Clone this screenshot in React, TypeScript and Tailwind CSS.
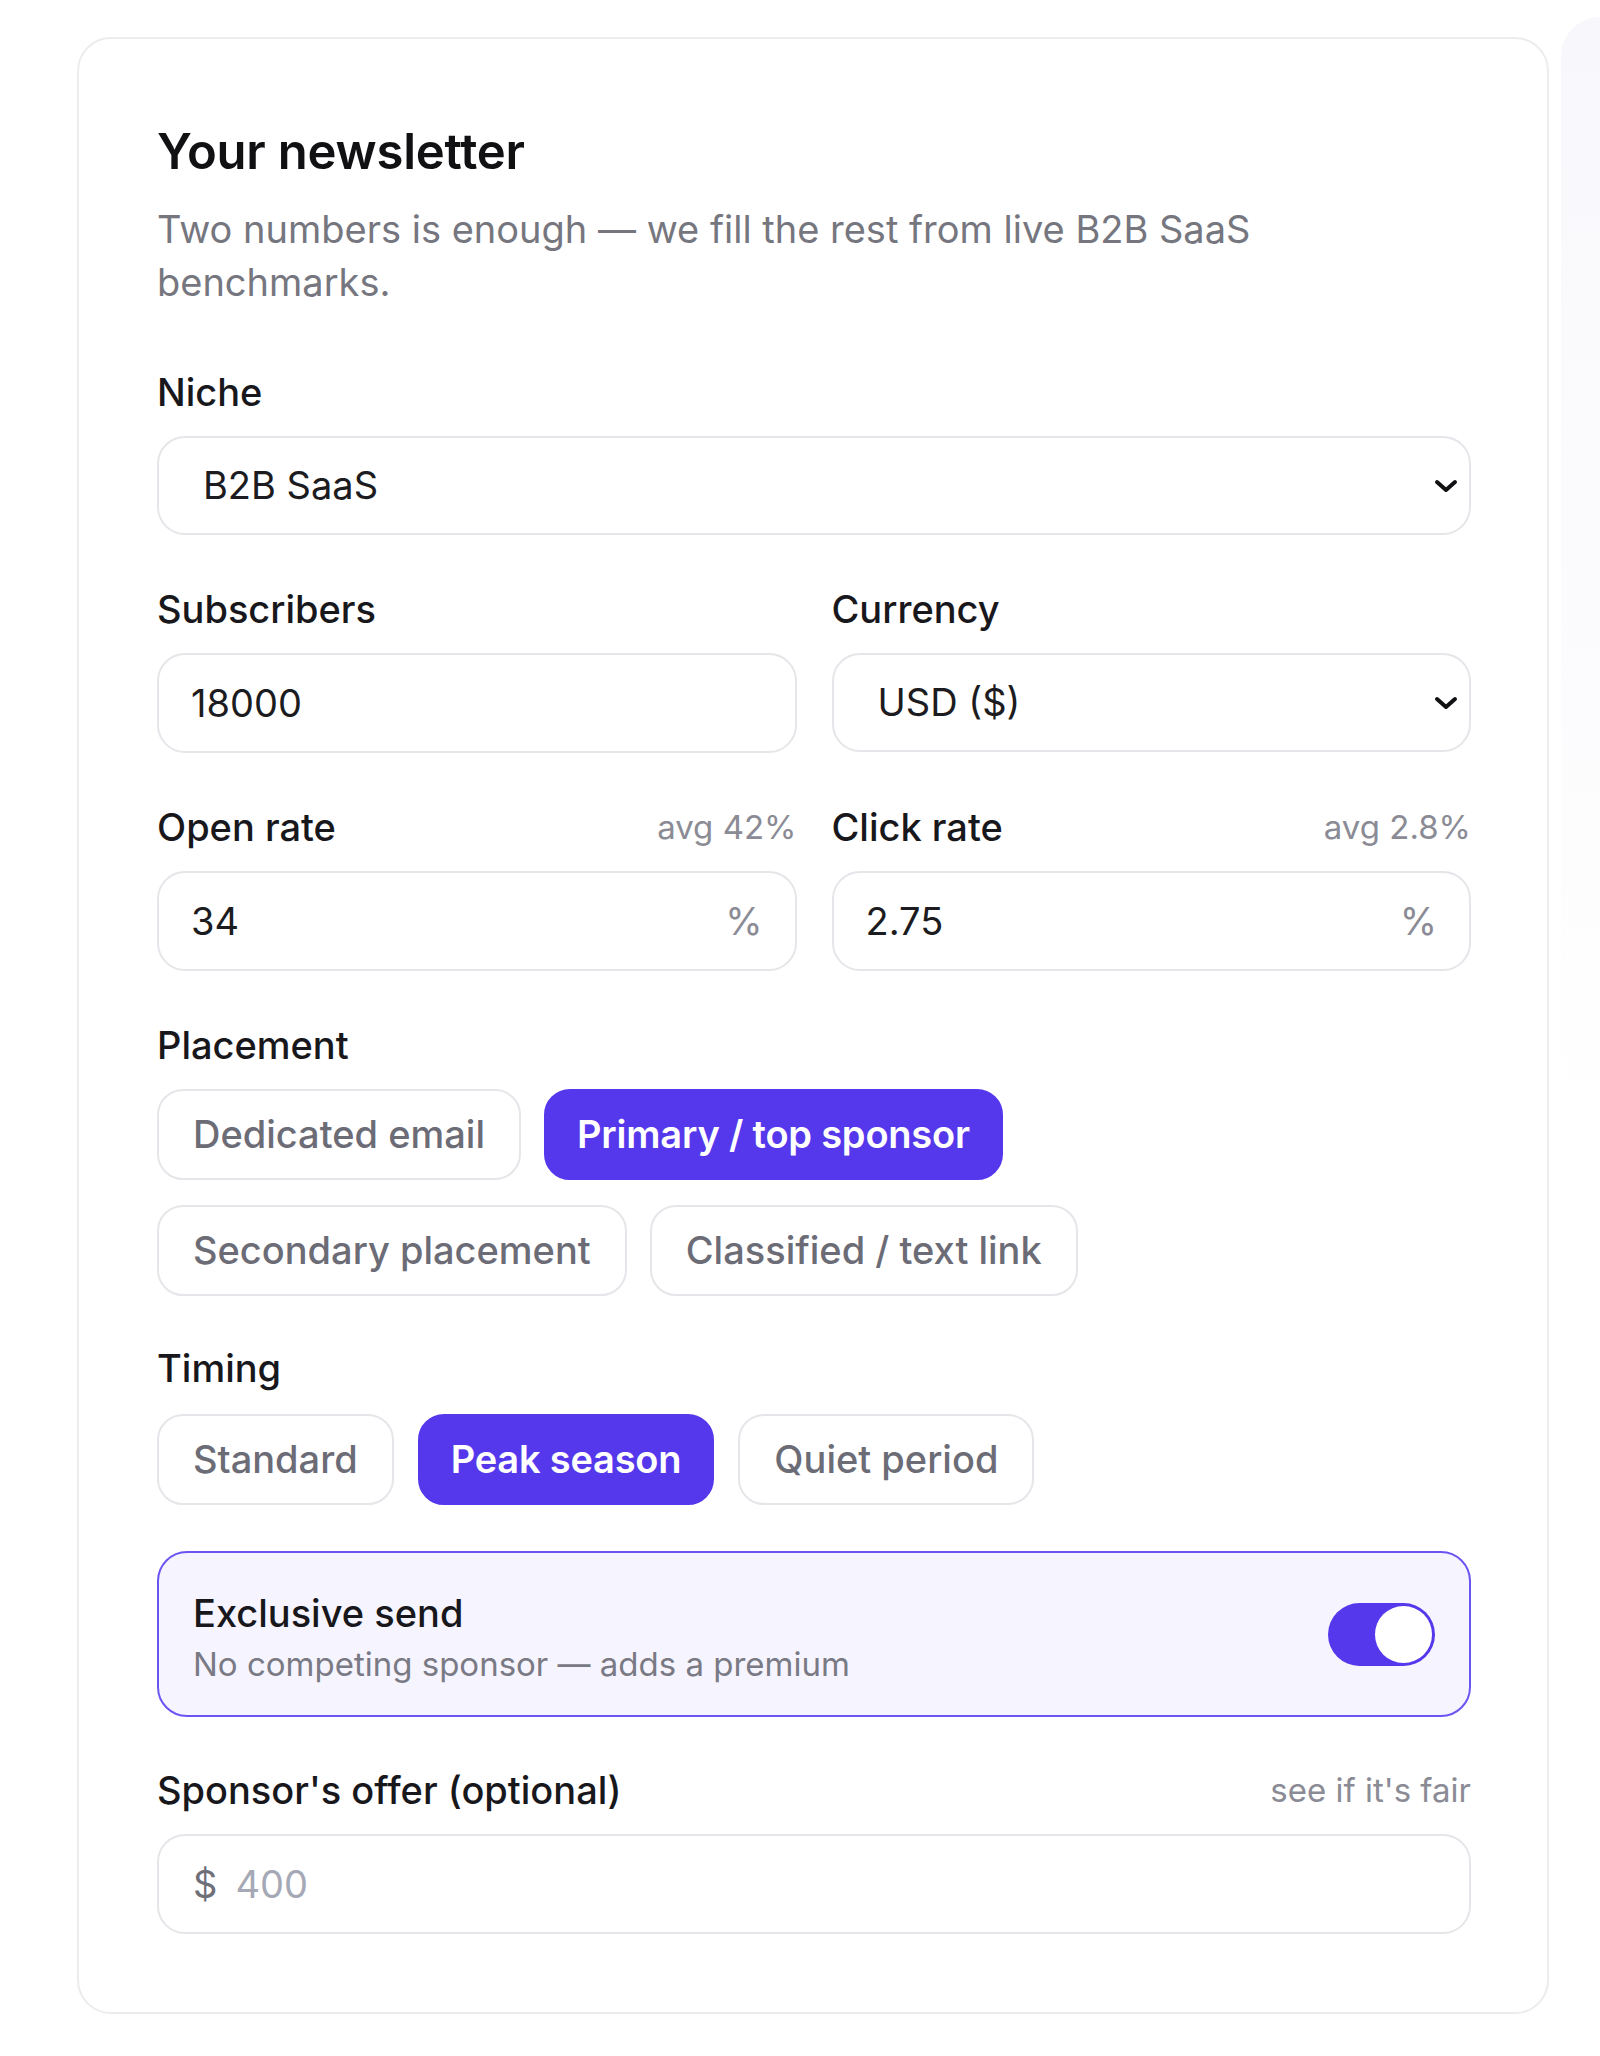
import React from "react";

const purple = "bg-[#5538ec]";

function Chevron() {
  return (
    <svg width="26" height="18" viewBox="0 0 26 18" fill="none" className="shrink-0">
      <path d="M4 5 L13 13 L22 5" stroke="#111114" strokeWidth="4" strokeLinecap="round" strokeLinejoin="round" />
    </svg>
  );
}

function Label({ children, hint }: { children: React.ReactNode; hint?: string }) {
  return (
    <div className="flex items-center justify-between h-[48px]">
      <span className="text-[38px] leading-[48px] font-medium text-[#18181c]">{children}</span>
      {hint && <span className="text-[33px] leading-[48px] text-[#8b8b95]">{hint}</span>}
    </div>
  );
}

function SelectBox({ value }: { value: string }) {
  return (
    <div className="mt-[20px] h-[99px] rounded-[28px] border-2 border-[#e6e6ea] bg-white flex items-center justify-between pl-[44px] pr-[10px]">
      <span className="text-[38px] text-[#1b1b20]">{value}</span>
      <Chevron />
    </div>
  );
}

function InputBox({ value, suffix }: { value: string; suffix?: string }) {
  return (
    <div className="mt-[20px] h-[100px] rounded-[28px] border-2 border-[#e6e6ea] bg-white flex items-center justify-between px-[32px]">
      <span className="text-[38px] text-[#1b1b20]">{value}</span>
      {suffix && <span className="text-[38px] text-[#8b8b95]">{suffix}</span>}
    </div>
  );
}

function Chip({ label, active }: { label: string; active?: boolean }) {
  return (
    <div
      className={
        active
          ? `h-[91px] px-[31px] rounded-[26px] border-2 border-[#5538ec] ${purple} text-white font-semibold text-[38px] tracking-[-0.2px] flex items-center`
          : "h-[91px] px-[34px] rounded-[26px] border-2 border-[#e6e6ea] bg-white text-[#6c6c77] font-medium text-[38px] flex items-center"
      }
    >
      {label}
    </div>
  );
}

export default function App() {
  return (
    <div className="min-h-[2056px] bg-white flex items-start pl-[77px] pt-[37px] font-['Inter','Noto_Sans',sans-serif]">
      <div className="w-[1472px] h-[1977px] shrink-0 rounded-[34px] border-2 border-[#ececef] bg-white pl-[78px] pr-[76px] pt-[84px]">
        {/* Header */}
        <h1 className="text-[49px] leading-[58px] font-semibold text-[#111114] tracking-[-0.2px]">Your newsletter</h1>
        <p className="mt-[22px] max-w-[1220px] text-[38px] leading-[53px] text-[#76767f]">
          Two numbers is enough — we fill the rest from live B2B SaaS benchmarks.
        </p>

        {/* Niche */}
        <div className="mt-[59px]">
          <Label>Niche</Label>
          <SelectBox value="B2B SaaS" />
        </div>

        {/* Subscribers / Currency */}
        <div className="mt-[50px] grid grid-cols-2 gap-x-[35px]">
          <div>
            <Label>Subscribers</Label>
            <InputBox value="18000" />
          </div>
          <div>
            <Label>Currency</Label>
            <SelectBox value="USD ($)" />
          </div>
        </div>

        {/* Rates */}
        <div className="mt-[50px] grid grid-cols-2 gap-x-[35px]">
          <div>
            <Label hint="avg 42%">Open rate</Label>
            <InputBox value="34" suffix="%" />
          </div>
          <div>
            <Label hint="avg 2.8%">Click rate</Label>
            <InputBox value="2.75" suffix="%" />
          </div>
        </div>

        {/* Placement */}
        <div className="mt-[50px]">
          <Label>Placement</Label>
          <div className="mt-[20px] flex flex-wrap gap-x-[23px] gap-y-[25px] max-w-[960px]">
            <Chip label="Dedicated email" />
            <Chip label="Primary / top sponsor" active />
            <Chip label="Secondary placement" />
            <Chip label="Classified / text link" />
          </div>
        </div>

        {/* Timing */}
        <div className="mt-[48px]">
          <Label>Timing</Label>
          <div className="mt-[22px] flex gap-x-[24px]">
            <Chip label="Standard" />
            <Chip label="Peak season" active />
            <Chip label="Quiet period" />
          </div>
        </div>

        {/* Exclusive send */}
        <div className="mt-[46px] h-[166px] rounded-[30px] border-2 border-[#6b55f2] bg-[#f6f5ff] flex items-center justify-between pl-[34px] pr-[34px]">
          <div className="pt-[8px]">
            <div className="text-[38px] leading-[46px] font-medium text-[#18181c]">Exclusive send</div>
            <div className="mt-[6px] text-[33px] leading-[44px] text-[#7a7a85]">No competing sponsor — adds a premium</div>
          </div>
          <div className={`w-[107px] h-[63px] rounded-full ${purple} p-[3px] flex justify-end`}>
            <div className="w-[57px] h-[57px] rounded-full bg-white" />
          </div>
        </div>

        {/* Sponsor offer */}
        <div className="mt-[49px]">
          <Label hint="see if it's fair">Sponsor's offer (optional)</Label>
          <div className="mt-[20px] h-[100px] rounded-[28px] border-2 border-[#e6e6ea] bg-white flex items-center px-[34px] gap-[18px]">
            <span className="text-[38px] text-[#6f6f79]">$</span>
            <span className="text-[38px] text-[#a5a9b5]">400</span>
          </div>
        </div>
      </div>

      {/* faint neighbouring panel */}
      <div className="ml-[12px] -mt-[20px] w-[60px] h-[1150px] rounded-tl-[40px] bg-linear-to-b from-[#f8f8fc] to-white" />
    </div>
  );
}
